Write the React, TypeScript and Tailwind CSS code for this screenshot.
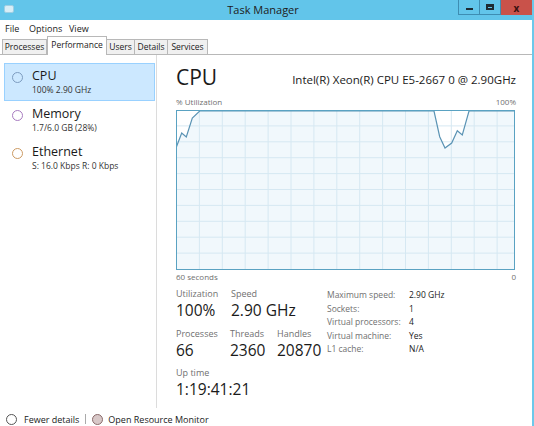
import React from 'react';

const pts: [number, number][] = [
  [0, 38], [5.7, 23], [10.3, 27], [16.3, 8], [23.7, 1], [258, 1], [263.7, 26.7],
  [269, 38], [275.7, 33], [281.3, 20.7], [286.3, 25], [293, 1], [339, 1],
];

function Graph() {
  const line = pts.map((p) => p.join(',')).join(' ');
  const fill = `${line} 339,160 0,160`;
  const vx = Array.from({ length: 14 }, (_, i) => 23.4 + 22.9 * i);
  const hy = Array.from({ length: 9 }, (_, j) => 15.9 * (j + 1));
  return (
    <svg width="339" height="160" viewBox="0 0 339 160" className="block">
      <rect x="0" y="0" width="339" height="160" fill="#ffffff" />
      <polygon points={fill} fill="#f1f8fc" />
      {vx.map((x) => (
        <line key={x} x1={x} y1="0" x2={x} y2="160" stroke="#d6e8f2" strokeWidth="1" />
      ))}
      {hy.map((y) => (
        <line key={y} x1="0" y1={y} x2="339" y2={y} stroke="#d6e8f2" strokeWidth="1" />
      ))}
      <polyline points={line} fill="none" stroke="#5a93b4" strokeWidth="1.2" />
      <rect x="0.5" y="0.5" width="338" height="159" fill="none" stroke="#5aa2c2" strokeWidth="1" />
    </svg>
  );
}

const resources = [
  { name: 'CPU', sub: '100%  2.90 GHz', ring: 'border-[#7d9cc0]', active: true },
  { name: 'Memory', sub: '1.7/6.0 GB (28%)', ring: 'border-[#a77bc0]', active: false },
  { name: 'Ethernet', sub: 'S: 16.0 Kbps  R: 0 Kbps', ring: 'border-[#cc9a62]', active: false },
];

const tabs = [
  { name: 'Processes', w: 'w-[45px]' },
  { name: 'Performance', w: 'w-[60px]', active: true },
  { name: 'Users', w: 'w-[28px]' },
  { name: 'Details', w: 'w-[33px]' },
  { name: 'Services', w: 'w-[40px]' },
];

const specs = [
  ['Maximum speed:', '2.90 GHz'],
  ['Sockets:', '1'],
  ['Virtual processors:', '4'],
  ['Virtual machine:', 'Yes'],
  ['L1 cache:', 'N/A'],
];

function Stat({ label, value, w }: { label: string; value: string; w: string }) {
  return (
    <div className={w}>
      <div className="text-[9px] leading-[12px] text-[#707070]">{label}</div>
      <div className="text-[15.5px] leading-[21px] text-[#1a1a1a]">{value}</div>
    </div>
  );
}

export default function App() {
  return (
    <div className="w-[534px] h-[426px] overflow-hidden bg-white flex flex-col font-['Open_Sans','Liberation_Sans',sans-serif] text-[#1a1a1a] border-r-2 border-[#6cc8ea]">
      {/* Title bar */}
      <div className="h-[20px] bg-[#62c5ea] flex items-start relative shrink-0">
        <div className="ml-[4px] mt-[5px] w-[10px] h-[8px] rounded-[2px] bg-[#d8eef7] border border-[#9fcfe3]" />
        <div className="absolute left-[-6px] right-0 top-[2px] text-center text-[11px] leading-[16px] text-[#202020]">
          Task Manager
        </div>
        <div className="ml-auto flex h-[15px] relative">
          <div className="w-[22px] h-full border border-t-0 border-[#3e8db2] flex items-center justify-center">
            <div className="w-[7px] h-[2px] bg-[#1d2b33] mt-[3px]" />
          </div>
          <div className="w-[21px] h-full border border-t-0 border-l-0 border-[#3e8db2] flex items-center justify-center">
            <div className="w-[8px] h-[6px] border-2 border-t-[3px] border-[#1d2b33]" />
          </div>
          <div className="w-[31px] h-full bg-[#c9524a] flex items-center justify-center text-[10px] font-bold text-[#3a1010] leading-none">
            x
          </div>
        </div>
      </div>

      {/* Menu */}
      <div className="h-[17px] flex items-center pl-[5px] text-[9px] text-[#1a1a1a] shrink-0">
        <span className="w-[24px]">File</span>
        <span className="w-[40px]">Options</span>
        <span>View</span>
      </div>

      {/* Tabs */}
      <div className="h-[18px] flex items-end pl-[2px] border-b border-[#b8b8b8] text-[8.5px] shrink-0">
        {tabs.map((t, i) =>
          t.active ? (
            <div key={t.name} className={`${t.w} h-[19px] bg-white border border-b-0 border-[#b8b8b8] leading-[15px] text-center -mb-px relative z-10`}>
              {t.name}
            </div>
          ) : (
            <div
              key={t.name}
              className={`${t.w} h-[15px] bg-[#f0f0f0] border border-b-0 border-[#b8b8b8] leading-[14px] text-center ${i > 1 ? 'border-l-0' : ''}`}
            >
              {t.name}
            </div>
          ),
        )}
      </div>

      {/* Main */}
      <div className="flex h-[353px] shrink-0">
        {/* Left list */}
        <div className="w-[157px] border-r border-[#dcdcdc] pt-[8px] pl-[4px] pr-[1px] rounded-bl-[4px]">
          {resources.map((r) => (
            <div
              key={r.name}
              className={`h-[38px] flex items-start pl-[7px] border ${r.active ? 'bg-[#cce8ff] border-[#99d1ff]' : 'border-transparent'}`}
            >
              <div className={`mt-[8px] w-[11px] h-[11px] rounded-full border-[1.5px] ${r.ring}`} />
              <div className="ml-[9px]">
                <div className="text-[12.5px] leading-[16px] mt-[4px] text-[#1a1a1a]">{r.name}</div>
                <div className="text-[8.5px] leading-[12px] text-[#333]">{r.sub}</div>
              </div>
            </div>
          ))}
        </div>

        {/* Right detail */}
        <div className="flex-1 pl-[19px] pr-[16px]">
          <div className="flex items-end justify-between h-[35px]">
            <div className="text-[21px] leading-[26px] text-[#1a1a1a]">CPU</div>
            <div className="text-[11.5px] leading-[16px] mb-[2px] text-[#1a1a1a]">Intel(R) Xeon(R) CPU E5-2667 0 @ 2.90GHz</div>
          </div>
          <div className="flex justify-between text-[8px] leading-[12px] text-[#707070] mt-[6px]">
            <span>% Utilization</span>
            <span>100%</span>
          </div>
          <div className="mt-[2px]">
            <Graph />
          </div>
          <div className="flex justify-between text-[8px] leading-[12px] text-[#707070] mt-[1px]">
            <span>60 seconds</span>
            <span>0</span>
          </div>

          <div className="flex mt-[5px]">
            <div className="w-[151px]">
              <div className="flex">
                <Stat label="Utilization" value="100%" w="w-[55px]" />
                <Stat label="Speed" value="2.90 GHz" w="w-[90px]" />
              </div>
              <div className="flex mt-[7px]">
                <Stat label="Processes" value="66" w="w-[54px]" />
                <Stat label="Threads" value="2360" w="w-[47px]" />
                <Stat label="Handles" value="20870" w="w-[50px]" />
              </div>
              <div className="mt-[6px]">
                <Stat label="Up time" value="1:19:41:21" w="w-[100px]" />
              </div>
            </div>
            <div className="text-[8.5px] leading-[13.5px]">
              {specs.map(([k, v]) => (
                <div key={k} className="flex">
                  <span className="w-[82px] text-[#707070]">{k}</span>
                  <span className="text-[#1a1a1a]">{v}</span>
                </div>
              ))}
            </div>
          </div>
        </div>
      </div>

      {/* Footer */}
      <div className="flex items-start pl-[6px] pt-[6px] text-[9px] leading-[11px] text-[#1a1a1a]">
        <div className="w-[11px] h-[11px] rounded-full border border-[#555]" />
        <span className="ml-[7px]">Fewer details</span>
        <span className="mx-[6px] w-px h-[10px] bg-[#aaa]" />
        <div className="w-[11px] h-[11px] rounded-full border border-[#8a6a6a] bg-[#d8c8c8]" />
        <span className="ml-[5px]">Open Resource Monitor</span>
      </div>
    </div>
  );
}
